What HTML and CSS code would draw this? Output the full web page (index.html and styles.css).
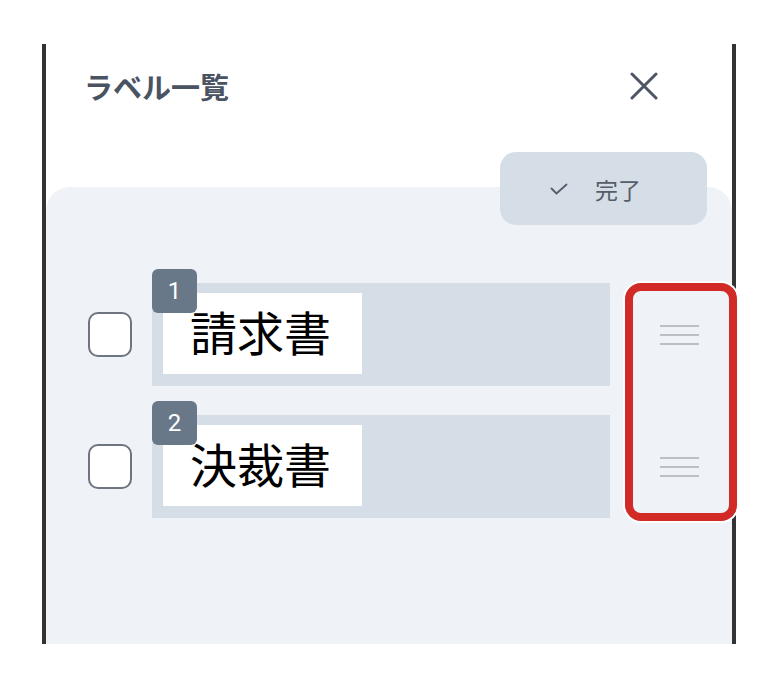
FILE: index.html
```html
<!DOCTYPE html>
<html lang="ja">
<head>
<meta charset="utf-8">
<title>ラベル一覧</title>
<link rel="stylesheet" href="styles.css">
</head>
<body>
<div class="frame">
  <header class="header">
    <h1 class="title">ラベル一覧</h1>
    <button class="close" aria-label="閉じる">
      <svg width="28" height="28" viewBox="0 0 28 28"><path d="M2 2 L26 26 M26 2 L2 26" stroke="#4b5563" stroke-width="3" stroke-linecap="round" fill="none"/></svg>
    </button>
  </header>
  <section class="panel">
    <button class="done">
      <svg class="check" width="18" height="12" viewBox="0 0 18 12"><path d="M1.5 5.5 L6.5 10.5 L16.5 1.5" stroke="#555d69" stroke-width="1.8" fill="none" stroke-linecap="round" stroke-linejoin="round"/></svg>
      <span>完了</span>
    </button>
    <ul class="list">
      <li class="row">
        <span class="checkbox"></span>
        <div class="label">
          <span class="badge">1</span>
          <span class="name">請求書</span>
        </div>
        <span class="handle"><i></i><i></i><i></i></span>
      </li>
      <li class="row">
        <span class="checkbox"></span>
        <div class="label">
          <span class="badge">2</span>
          <span class="name">決裁書</span>
        </div>
        <span class="handle"><i></i><i></i><i></i></span>
      </li>
    </ul>
  </section>
  <div class="highlight"></div>
</div>
</body>
</html>
```
FILE: styles.css
```css
html, body {
  margin: 0;
  padding: 0;
  background: #ffffff;
  font-family: "Noto Sans CJK JP", "Noto Sans", sans-serif;
}

.frame {
  position: relative;
  margin: 44px 0 0 42px;
  width: 694px;
  height: 600px;
  box-sizing: border-box;
  border-left: 4px solid #333333;
  border-right: 4px solid #333333;
  display: flex;
  flex-direction: column;
  background: #ffffff;
}

.header {
  height: 143px;
  flex: none;
  box-sizing: border-box;
  padding: 22px 68px 0 38px;
  display: flex;
  justify-content: space-between;
  align-items: flex-start;
}

.title {
  margin: 0;
  font-size: 29px;
  line-height: 40px;
  font-weight: 700;
  color: #4a5361;
}

.close {
  width: 40px;
  height: 40px;
  padding: 0;
  border: none;
  background: none;
  display: flex;
  align-items: center;
  justify-content: center;
}

.panel {
  flex: 1;
  background: #eff3f8;
  border-radius: 24px 24px 0 0;
  display: flex;
  flex-direction: column;
  padding: 0 25px 0 42px;
}

.done {
  align-self: flex-end;
  margin-top: -35px;
  width: 207px;
  height: 73px;
  border: none;
  border-radius: 16px;
  background: #d5dde6;
  display: flex;
  align-items: center;
  justify-content: flex-start;
  gap: 27px;
  padding: 0 0 0 50px;
  font-family: "Noto Sans CJK JP", sans-serif;
  font-size: 23px;
  color: #555d69;
}

.done span {
  line-height: 30px;
}

.list {
  list-style: none;
  margin: 58px 0 0 0;
  padding: 0;
  display: flex;
  flex-direction: column;
  gap: 29px;
}

.row {
  display: flex;
  align-items: center;
}

.checkbox {
  width: 44px;
  height: 45px;
  box-sizing: border-box;
  border: 2px solid #6e7480;
  border-radius: 10px;
  background: #ffffff;
  margin-right: 20px;
  flex: none;
}

.label {
  position: relative;
  width: 458px;
  height: 103px;
  box-sizing: border-box;
  background: #d5dde6;
  padding: 10px 0 0 11px;
  flex: none;
}

.name {
  display: flex;
  align-items: center;
  width: 199px;
  height: 81px;
  box-sizing: border-box;
  padding: 0 0 6px 27px;
  background: #ffffff;
  font-size: 47px;
  color: #000000;
  line-height: 1;
}

.badge {
  position: absolute;
  left: 0;
  top: -14px;
  width: 45px;
  height: 44px;
  border-radius: 6px;
  background: #687889;
  color: #ffffff;
  font-family: Roboto, "Noto Sans", sans-serif;
  font-size: 24px;
  display: flex;
  align-items: center;
  justify-content: center;
  z-index: 1;
}

.handle {
  margin-left: 50px;
  width: 39px;
  display: flex;
  flex-direction: column;
  gap: 7px;
  flex: none;
}

.handle i {
  display: block;
  height: 2px;
  background: #bcc0c6;
}

.highlight {
  position: absolute;
  left: 579px;
  top: 239px;
  width: 112px;
  height: 238px;
  box-sizing: border-box;
  border: 8px solid #d22b27;
  border-radius: 16px;
  box-shadow: 0 0 0 2px #ffffff;
}
```
